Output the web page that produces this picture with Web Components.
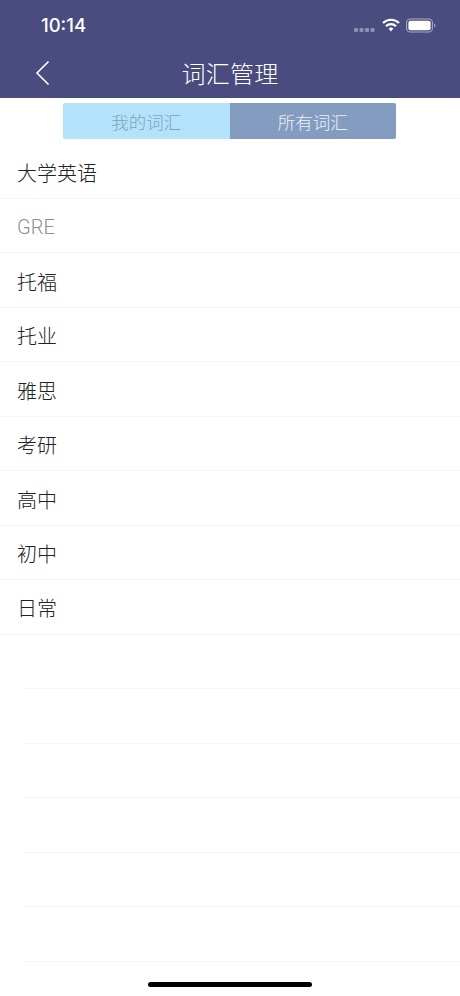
<!DOCTYPE html>
<html lang="zh">
<head>
<meta charset="utf-8">
<title>词汇管理</title>
<style>
  html, body { margin: 0; height: 100%; background: #fff; }
  body { font-family: "Noto Sans CJK SC", "Noto Sans", sans-serif; }
  #app { display: flex; flex-direction: column; height: 996px; overflow: hidden; position: relative; }
</style>
</head>
<body>
<div id="app">
  <nav-header title="词汇管理" time="10:14"></nav-header>
  <segment-tabs></segment-tabs>
  <word-list>
    <word-row>大学英语</word-row>
    <word-row muted>GRE</word-row>
    <word-row>托福</word-row>
    <word-row>托业</word-row>
    <word-row>雅思</word-row>
    <word-row>考研</word-row>
    <word-row>高中</word-row>
    <word-row>初中</word-row>
    <word-row>日常</word-row>
    <word-row empty></word-row>
    <word-row empty></word-row>
    <word-row empty></word-row>
    <word-row empty></word-row>
    <word-row empty></word-row>
    <word-row empty></word-row>
  </word-list>
  <home-bar></home-bar>
</div>

<script>
const headerTemplate = document.createElement("template");

headerTemplate.innerHTML = `
  <style>
    :host {
      display: block;
      flex: none;
      height: 98px;
      background: #4a4b7f;
      color: #fff;
    }
    #status {
      height: 50px;
      display: flex;
      align-items: center;
      justify-content: space-between;
      padding: 0 24px 0 41px;
      box-sizing: border-box;
    }
    #time {
      font: 500 18.5px Inter, "Noto Sans", sans-serif;
    }
    #icons {
      display: flex;
      align-items: center;
      gap: 6px;
    }
    #bar {
      height: 48px;
      display: flex;
      align-items: center;
      justify-content: center;
      position: relative;
    }
    #back {
      position: absolute;
      left: 35px;
      top: 11px;
      transform: translateY(-1px);
    }
    h1 {
      margin: -4px 0 0;
      font-size: 24px;
      font-weight: 300;
      letter-spacing: 0.25px;
    }
  </style>
  <div id="status">
    <span id="time"></span>
    <div id="icons">
      <svg width="22" height="8" viewBox="0 0 22 8" style="margin-top:9px">
        <g fill="#8f90b4">
          <rect x="0" y="2" width="4" height="4" rx="1.2"/>
          <rect x="5.5" y="2" width="4" height="4" rx="1.2"/>
          <rect x="11" y="2" width="4" height="4" rx="1.2"/>
          <rect x="16.5" y="2" width="4" height="4" rx="1.2"/>
        </g>
      </svg>
      <svg width="18" height="14" viewBox="0 0 18 14">
        <path d="M1 5a11.5 11.5 0 0 1 16 0" fill="none" stroke="#fff" stroke-width="2.2"/>
        <path d="M4 8.2a7 7 0 0 1 10 0" fill="none" stroke="#fff" stroke-width="2.2"/>
        <path d="M6.6 10.6a3.4 3.4 0 0 1 4.8 0L9 13.4z" fill="#fff"/>
      </svg>
      <svg width="30" height="15" viewBox="0 0 30 15">
        <rect x="0.6" y="1" width="25.8" height="13" rx="3.6" fill="none" stroke="#a9aac8" stroke-width="1.1"/>
        <rect x="2.4" y="2.8" width="22.2" height="9.4" rx="2" fill="#fff"/>
        <path d="M28 5.5c1 .3 1.6 1 1.6 2s-.6 1.7-1.6 2z" fill="#8f90b4"/>
      </svg>
    </div>
  </div>
  <div id="bar">
    <svg id="back" width="16" height="26" viewBox="0 0 16 26">
      <path d="M13.5 1.5 2 13l11.5 11.5" fill="none" stroke="#fff" stroke-width="1.6"/>
    </svg>
    <h1></h1>
  </div>
`;

customElements.define(
  "nav-header",
  class extends HTMLElement {
    constructor() {
      super();
      const clone = headerTemplate.content.cloneNode(true);
      this.attachShadow({ mode: "open" }).appendChild(clone);
    }

    connectedCallback() {
      this.shadowRoot.querySelector("h1").textContent = this.getAttribute("title");
      this.shadowRoot.querySelector("#time").textContent = this.getAttribute("time");
    }
  },
);

const tabsTemplate = document.createElement("template");

tabsTemplate.innerHTML = `
  <style>
    :host {
      display: flex;
      flex: none;
      justify-content: center;
      padding: 5px 1px 5.5px 0;
    }
    #tabs {
      display: flex;
      width: 333px;
      height: 36px;
      border-radius: 2px;
      overflow: hidden;
      font-size: 17.5px;
      font-weight: 300;
    }
    div div {
      flex: 1;
      display: flex;
      align-items: center;
      justify-content: center;
    }
    #mine {
      background: #b3e3fb;
      color: #84a0b9;
    }
    #all {
      background: #839cc0;
      color: #eef2f7;
    }
  </style>
  <div id="tabs">
    <div id="mine">我的词汇</div>
    <div id="all">所有词汇</div>
  </div>
`;

customElements.define(
  "segment-tabs",
  class extends HTMLElement {
    constructor() {
      super();
      const clone = tabsTemplate.content.cloneNode(true);
      this.attachShadow({ mode: "open" }).appendChild(clone);
    }
  },
);

const listTemplate = document.createElement("template");

listTemplate.innerHTML = `
  <style>
    :host {
      display: flex;
      flex-direction: column;
      flex: 1;
      min-height: 0;
    }
  </style>
  <slot></slot>
`;

customElements.define(
  "word-list",
  class extends HTMLElement {
    constructor() {
      super();
      const clone = listTemplate.content.cloneNode(true);
      this.attachShadow({ mode: "open" }).appendChild(clone);
    }
  },
);

const rowTemplate = document.createElement("template");

rowTemplate.innerHTML = `
  <style>
    :host {
      display: flex;
      flex: none;
      align-items: center;
      box-sizing: border-box;
      height: 54.47px;
      padding: 2px 0 0 17px;
      border-bottom: 1px solid #f5f5f6;
      color: #222;
      font-size: 20px;
      font-weight: 300;
    }
    :host([muted]) {
      color: #8f8f8f;
      font-family: Roboto, sans-serif;
      font-size: 20px;
      font-weight: 300;
    }
    :host([empty]) {
      margin-left: 24px;
      padding: 0;
    }
  </style>
  <slot></slot>
`;

customElements.define(
  "word-row",
  class extends HTMLElement {
    constructor() {
      super();
      const clone = rowTemplate.content.cloneNode(true);
      this.attachShadow({ mode: "open" }).appendChild(clone);
    }
  },
);

const homeTemplate = document.createElement("template");

homeTemplate.innerHTML = `
  <style>
    :host {
      display: block;
      position: absolute;
      left: 148px;
      bottom: 9px;
      width: 164px;
      height: 5px;
      border-radius: 3px;
      background: #000;
    }
  </style>
`;

customElements.define(
  "home-bar",
  class extends HTMLElement {
    constructor() {
      super();
      const clone = homeTemplate.content.cloneNode(true);
      this.attachShadow({ mode: "open" }).appendChild(clone);
    }
  },
);
</script>
</body>
</html>
